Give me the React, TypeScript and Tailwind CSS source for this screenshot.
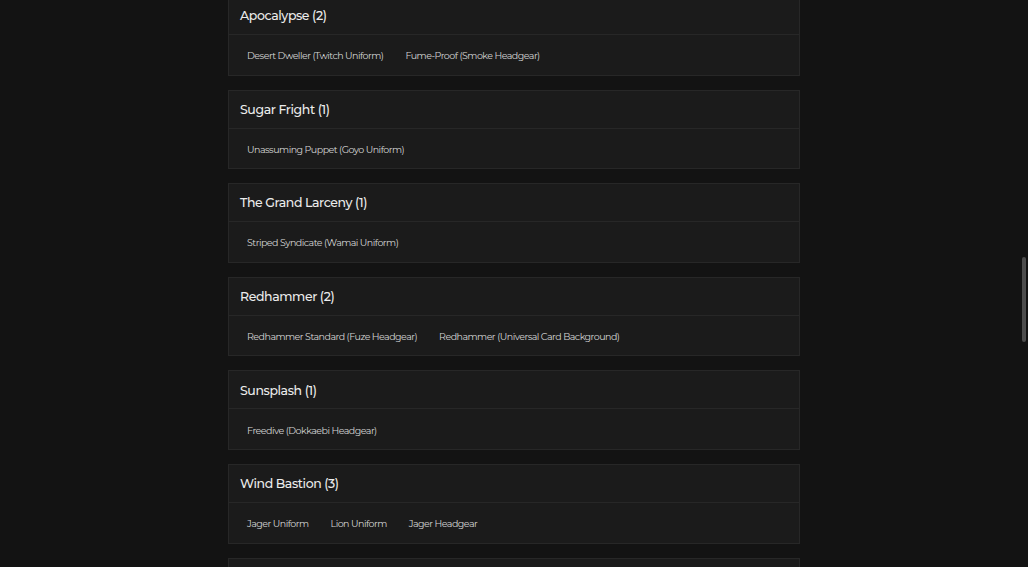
import React from "react";

type Group = { name: string; items: string[] };

const groups: Group[] = [
  { name: "Apocalypse", items: ["Desert Dweller (Twitch Uniform)", "Fume-Proof (Smoke Headgear)"] },
  { name: "Sugar Fright", items: ["Unassuming Puppet (Goyo Uniform)"] },
  { name: "The Grand Larceny", items: ["Striped Syndicate (Wamai Uniform)"] },
  { name: "Redhammer", items: ["Redhammer Standard (Fuze Headgear)", "Redhammer (Universal Card Background)"] },
  { name: "Sunsplash", items: ["Freedive (Dokkaebi Headgear)"] },
  { name: "Wind Bastion", items: ["Jager Uniform", "Lion Uniform", "Jager Headgear"] },
  { name: "Steel Wave", items: ["Ace Uniform"] },
];

export default function App() {
  return (
    <div
      className="relative h-[567px] w-[1028px] overflow-hidden bg-[#131313] text-[#e6e6e6]"
      style={{ fontFamily: "Montserrat, 'Noto Sans', sans-serif" }}
    >
      <div className="mx-auto -mt-[4px] flex w-[572px] flex-col gap-[14px]">
        {groups.map((group) => (
          <section
            key={group.name}
            className="border border-[#272727] bg-[#1b1b1b]"
          >
            <div className="flex h-[38px] items-center border-b border-[#272727] px-[11px] pt-[2px]">
              <h2 className="text-[12.5px] font-medium tracking-[-0.4px] text-[#ececec]">
                {group.name} ({group.items.length})
              </h2>
            </div>
            <div className="flex h-[39.6px] items-center gap-[8px] px-[11px] pt-[3px]">
              {group.items.map((item) => (
                <span
                  key={item}
                  className="px-[7px] text-[9.5px] tracking-[-0.52px] text-[#d4d4d4]"
                >
                  {item}
                </span>
              ))}
            </div>
          </section>
        ))}
      </div>
      <div className="absolute right-[2px] top-[257px] h-[85px] w-[4px] rounded-full bg-[#4d4d4d]" />
    </div>
  );
}
